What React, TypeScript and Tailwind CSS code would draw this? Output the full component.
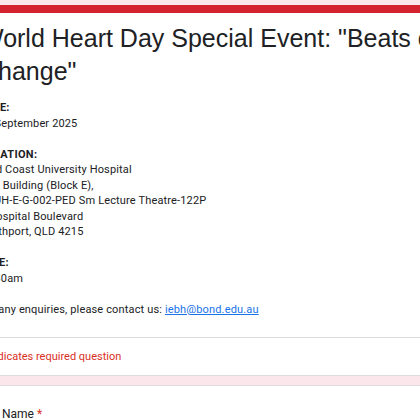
import React from "react";

export default function App() {
  const body = { fontFamily: "Roboto, 'Noto Sans', Arial, sans-serif" };
  return (
    <div className="w-[420px] h-[420px] overflow-hidden bg-[#fbe7eb]">
      <div className="w-[520px] -ml-[40px] pt-[5px] flex flex-col gap-[9px]">
        <div className="bg-white border border-[#dadce0] border-t-0 rounded-t-[8px] overflow-hidden">
          <div className="h-[8px] bg-[#d42230]" />
          <div className="pr-[24px] pt-[9px] pb-[20px] border-b border-[#dadce0]">
            <h1
              className="pl-[19px] text-[25px] leading-[33px] text-[#202124]"
              style={{ fontFamily: "'Liberation Sans', Arial, sans-serif" }}
            >
              World Heart Day Special Event: "Beats of Change"
            </h1>
            <div
              className="pl-[18px] mt-[12px] text-[11px] leading-[15.5px] tracking-[0.15px] text-[#202124]"
              style={body}
            >
              <div className="font-bold">DATE:</div>
              <div>29 September 2025</div>
              <div className="h-[15.5px]" />
              <div className="font-bold tracking-[0.3px]">LOCATION:</div>
              <div>Gold Coast University Hospital</div>
              <div>PED Building (Block E),</div>
              <div>GCUH-E-G-002-PED Sm Lecture Theatre-122P</div>
              <div>1 Hospital Boulevard</div>
              <div>Southport, QLD 4215</div>
              <div className="h-[15.5px]" />
              <div className="font-bold">TIME:</div>
              <div>10:30am</div>
              <div className="h-[15.5px]" />
              <div>
                For any enquiries, please contact us:{" "}
                <a href="#" className="text-[#1a73e8] underline">
                  iebh@bond.edu.au
                </a>
              </div>
            </div>
          </div>
          <div
            className="pl-[20px] pt-[11px] pb-[10px] text-[11px] leading-[15.5px] text-[#d93025]"
            style={body}
          >
            * Indicates required question
          </div>
        </div>
        <div className="bg-white border border-[#dadce0] rounded-[8px] h-[80px] pl-[19px] pt-[20px]">
          <div className="text-[12px] leading-[16px] text-[#202124]" style={body}>
            Full Name <span className="text-[#d93025]">*</span>
          </div>
        </div>
      </div>
    </div>
  );
}
